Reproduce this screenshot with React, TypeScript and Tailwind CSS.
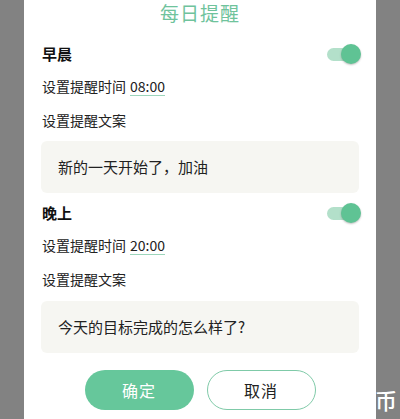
export default function App() {
  const font = { fontFamily: '"Noto Sans CJK SC", "Noto Sans", sans-serif' };

  return (
    <div
      className="relative w-[400px] h-[419px] overflow-hidden bg-[#828282]"
      style={font}
    >
      <div className="mx-6 -mt-4 pt-4 h-[440px] bg-white rounded-t-2xl">
        {/* Title */}
        <div className="h-[26px] flex items-center justify-center text-[19px] text-[#6fc39c] tracking-[1px]">
          每日提醒
        </div>

        <Section
          title="早晨"
          time="08:00"
          text="新的一天开始了，加油"
          titleMt="mt-[14px]"
          boxMt="mt-[9px]"
        />
        <Section
          title="晚上"
          time="20:00"
          text="今天的目标完成的怎么样了?"
          titleMt="mt-[6px]"
          boxMt="mt-[10px]"
        />

        {/* Buttons */}
        <div className="mt-[17px] flex justify-center gap-[13px]">
          <button className="w-[109px] h-[40px] rounded-full bg-[#66c79b] text-white text-[16px] tracking-[1px]">
            确定
          </button>
          <button className="w-[109px] h-[40px] rounded-full border border-[#7fcaa8] bg-white text-[#222] text-[16px] tracking-[1px]">
            取消
          </button>
        </div>
      </div>

      {/* watermark */}
      <div className="absolute left-[375px] top-[388px] text-[22px] font-medium text-white leading-none">
        币
      </div>
    </div>
  );
}

function Section({
  title,
  time,
  text,
  titleMt,
  boxMt,
}: {
  title: string;
  time: string;
  text: string;
  titleMt: string;
  boxMt: string;
}) {
  return (
    <div>
      <div className={`${titleMt} h-[28px] pl-[18px] pr-[15px] flex items-center justify-between`}>
        <span className="text-[15px] font-bold text-[#111]">{title}</span>
        <Toggle />
      </div>
      <div className="mt-[6px] h-[24px] pl-[18px] flex items-center text-[14px] text-[#222]">
        <span>设置提醒时间</span>
        <span className="ml-[4px] leading-[18px] border-b border-[#9cd5bb]">{time}</span>
      </div>
      <div className="mt-[10px] h-[24px] pl-[18px] flex items-center text-[14px] text-[#222]">
        设置提醒文案
      </div>
      <div
        className={`${boxMt} mx-[17px] h-[52px] rounded-md bg-[#f6f6f2] pl-[17px] flex items-center text-[15px] text-[#222]`}
      >
        {text}
      </div>
    </div>
  );
}

function Toggle() {
  return (
    <div className="relative w-[34px] h-[20px] flex items-center">
      <div className="w-[30px] h-[13px] rounded-full bg-[#b3e0ca]" />
      <div className="absolute right-0 top-0 w-[20px] h-[20px] rounded-full bg-[#5fc394] shadow-[0_1px_2px_rgba(0,0,0,0.25)]" />
    </div>
  );
}
